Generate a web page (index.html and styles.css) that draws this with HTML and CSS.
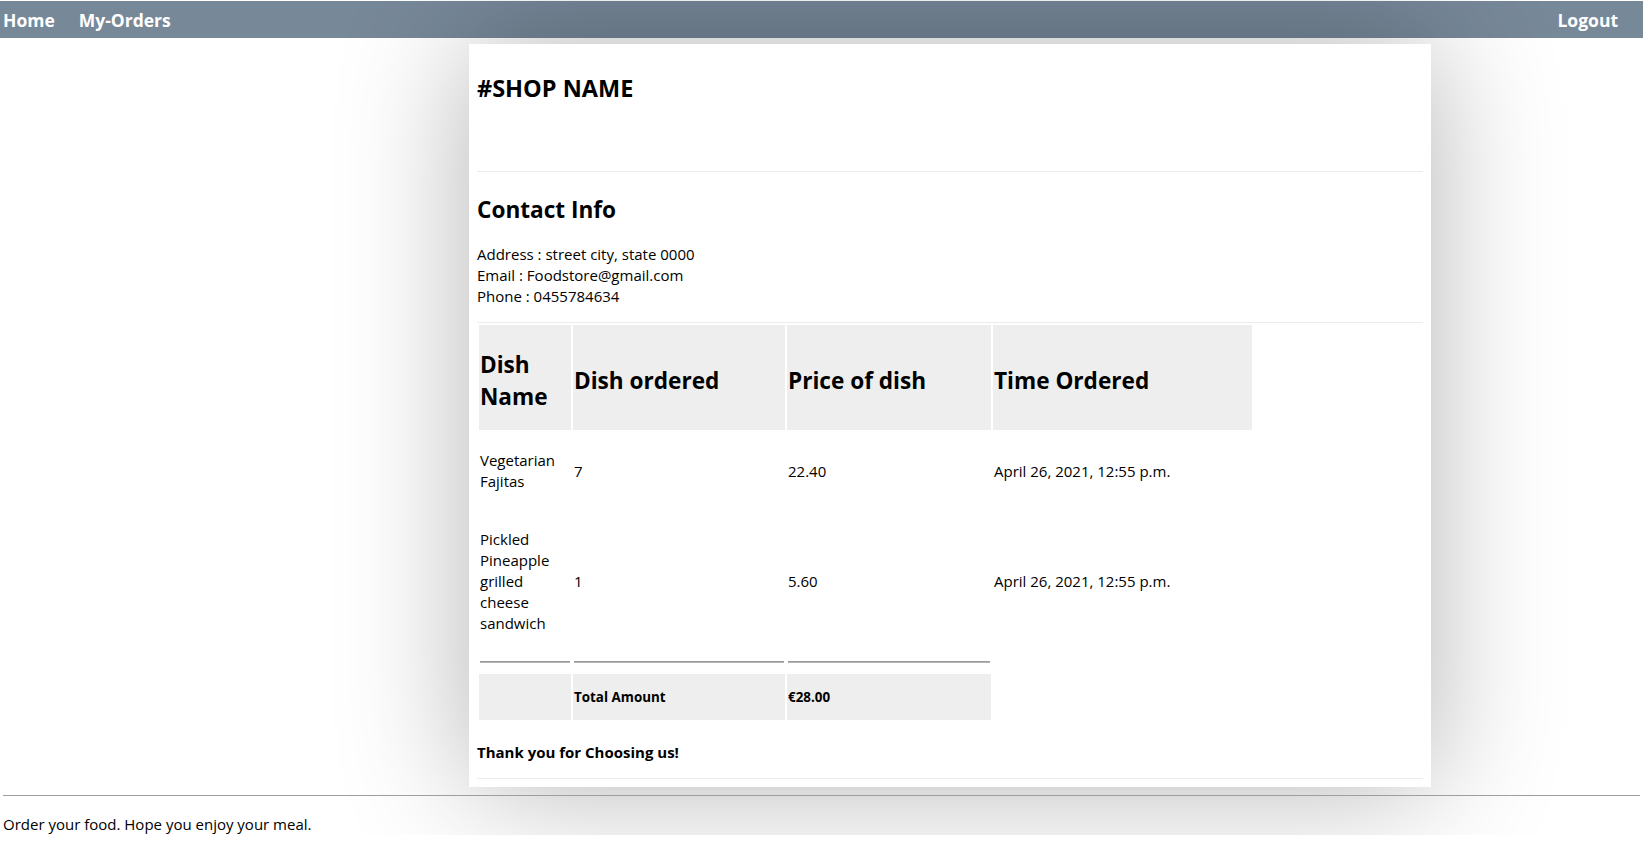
FILE: index.html
```html
<!DOCTYPE html>
<html lang="en">
<head>
<meta charset="utf-8">
<title>Order</title>
<link rel="stylesheet" href="styles.css">
</head>
<body>
<header class="topbar">
  <a class="nav-link" href="#">Home</a>
  <a class="nav-link" href="#">My-Orders</a>
  <span class="nav-spacer"></span>
  <a class="nav-link nav-link-last" href="#">Logout</a>
</header>

<main class="receipt">
  <section class="shop-block">
    <h1 class="shop-name">#SHOP NAME</h1>
  </section>

  <section class="contact-block">
    <h2 class="contact-title">Contact Info</h2>
    <div class="contact-lines">
      <div>Address : street city, state 0000</div>
      <div>Email : Foodstore@gmail.com</div>
      <div>Phone : 0455784634</div>
    </div>
  </section>

  <table class="orders">
    <thead>
      <tr>
        <th class="col-name">Dish Name</th>
        <th class="col-qty">Dish ordered</th>
        <th class="col-price">Price of dish</th>
        <th class="col-time">Time Ordered</th>
      </tr>
    </thead>
    <tbody>
      <tr class="item-row item-row-first">
        <td>Vegetarian Fajitas</td>
        <td>7</td>
        <td>22.40</td>
        <td>April 26, 2021, 12:55 p.m.</td>
      </tr>
      <tr class="item-row">
        <td>Pickled Pineapple grilled cheese sandwich</td>
        <td>1</td>
        <td>5.60</td>
        <td>April 26, 2021, 12:55 p.m.</td>
      </tr>
      <tr class="sep-row">
        <td><hr class="sep-line"></td>
        <td><hr class="sep-line"></td>
        <td><hr class="sep-line"></td>
      </tr>
      <tr class="total-row">
        <td></td>
        <td>Total Amount</td>
        <td>€28.00</td>
      </tr>
    </tbody>
  </table>

  <p class="thanks">Thank you for Choosing us!</p>
</main>

<footer class="page-footer">
  <p class="footer-text">Order your food. Hope you enjoy your meal.</p>
</footer>
</body>
</html>
```
FILE: styles.css
```css
html, body {
  margin: 0;
  padding: 0;
  background: #ffffff;
}

body {
  font-family: "Open Sans", "Noto Sans", sans-serif;
  font-size: 15px;
  line-height: 21px;
  color: #000;
}

/* ---------- top navigation ---------- */
.topbar {
  margin-top: 1px;
  height: 37px;
  background: #778899;
  display: flex;
  align-items: center;
  padding: 0 25px 0 3px;
}

.nav-link {
  color: #fff;
  text-decoration: none;
  font-weight: 700;
  font-size: 17.5px;
  line-height: 22px;
  margin-right: 24px;
  padding-top: 1px;
}

.nav-link-last {
  margin-right: 0;
}

.nav-spacer {
  flex: 1;
}

/* ---------- receipt card ---------- */
.receipt {
  margin: 6px 0 0 469px;
  width: 962px;
  box-sizing: border-box;
  padding: 8px;
  background: #fff;
  box-shadow: 0 0 120px rgba(0, 0, 0, 0.3);
}

.shop-block {
  padding-bottom: 67px;
  border-bottom: 1px solid #ebebeb;
}

.shop-name {
  margin: 20px 0 0;
  font-size: 23.5px;
  line-height: 32px;
  font-weight: 700;
}

.contact-block {
  padding-bottom: 15px;
  border-bottom: 1px solid #ebebeb;
}

.contact-title {
  margin: 23px 0 0;
  font-size: 22.6px;
  line-height: 30px;
  font-weight: 700;
}

.contact-lines {
  margin-top: 19px;
}

/* ---------- orders table ---------- */
.orders {
  table-layout: fixed;
  width: 777px;
  border-spacing: 2px;
  border-collapse: separate;
  margin: 0;
}

.orders th,
.orders td {
  box-sizing: border-box;
  text-align: left;
  vertical-align: middle;
}

.orders th {
  height: 105px;
  padding: 6px 1px 0;
  background: #eeeeee;
  font-size: 22.6px;
  line-height: 31.5px;
  font-weight: 700;
}

.col-name { width: 92px; }
.col-qty { width: 212px; }
.col-price { width: 204px; }
.col-time { width: 259px; }

.item-row td {
  padding: 18px 1px 19px;
  line-height: 21px;
}

.item-row-first td {
  padding: 18px 1px 17px;
}

.sep-row td {
  padding: 1px;
}

.sep-line {
  margin: 5px 0 8px;
  height: 0;
  border: 0;
  border-top: 1px solid #9a9a9a;
  border-bottom: 1px solid #b4b4b4;
}

.total-row td {
  padding: 14px 1px;
  background: #eeeeee;
  font-size: 13.4px;
  line-height: 18px;
  font-weight: 700;
}

.thanks {
  margin: 20px 0 0;
  padding-bottom: 15px;
  border-bottom: 1px solid #ebebeb;
  font-weight: 700;
  font-size: 15px;
  line-height: 21px;
}

/* ---------- footer ---------- */
.page-footer {
  margin: 8px 3px 0;
  border-top: 1px solid #9e9e9e;
}

.footer-text {
  margin: 18px 0 0;
}
```
